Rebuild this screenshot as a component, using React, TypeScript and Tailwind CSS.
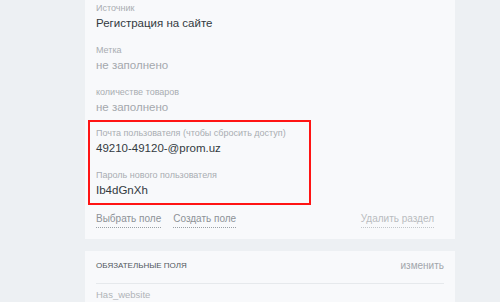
import React from 'react';

function Field({ label, value, empty }: { label: string; value: string; empty?: boolean }) {
  return (
    <div className="pb-3">
      <div className="text-[9px] leading-[14px] text-[#a9adb2]">{label}</div>
      <div className={`text-[11.5px] leading-[16px] ${empty ? 'text-[#a4a8ad]' : 'text-[#33393f]'}`}>{value}</div>
    </div>
  );
}

export default function App() {
  return (
    <div className="w-[500px] h-[302px] overflow-hidden bg-[#edf0f3] font-['Liberation_Sans',Arial,sans-serif]">
      <div className="ml-[85px] w-[370px] flex flex-col gap-3">
        {/* Section fields */}
        <div className="bg-[#f8f9fb] pl-[11px] pr-[11px] pt-[1px]">
          <Field label="Источник" value="Регистрация на сайте" />
          <Field label="Метка" value="не заполнено" empty />
          <div className="-mb-[7px]">
            <Field label="количестве товаров" value="не заполнено" empty />
          </div>

          <div className="-ml-[8px] w-[223px] border-2 border-[#ff1414] pl-[6px] pt-[4px] pb-[5px]">
            <div className="pb-3">
              <div className="text-[9px] leading-[14px] text-[#a9adb2]">Почта пользователя (чтобы сбросить доступ)</div>
              <div className="text-[11.5px] leading-[16px] text-[#33393f]">49210-49120-@prom.uz</div>
            </div>
            <div>
              <div className="text-[9px] leading-[14px] text-[#a9adb2]">Пароль нового пользователя</div>
              <div className="text-[11.5px] leading-[16px] text-[#33393f]">Ib4dGnXh</div>
            </div>
          </div>

          <div className="flex items-center pt-[6px] pb-[11px] text-[10px] leading-[16px]">
            <span className="text-[#8d9297] border-b border-dotted border-[#9aa0a5]">Выбрать поле</span>
            <span className="ml-3 text-[#8d9297] border-b border-dotted border-[#9aa0a5]">Создать поле</span>
            <span className="ml-auto mr-[10px] text-[#b8bcc0] border-b border-dotted border-[#c2c6ca]">Удалить раздел</span>
          </div>
        </div>

        {/* Required fields */}
        <div className="bg-[#f8f9fb] px-[11px] pt-[8px]">
          <div className="flex items-center justify-between pb-[10px] border-b border-[#e6e9ec]">
            <span className="text-[8px] leading-[14px] uppercase text-[#50565c]">Обязательные поля</span>
            <span className="text-[10px] leading-[14px] text-[#a2a6ab]">изменить</span>
          </div>
          <div className="pt-[4px] text-[9.5px] leading-[14px] text-[#b0b4b8]">Has_website</div>
        </div>
      </div>
    </div>
  );
}
